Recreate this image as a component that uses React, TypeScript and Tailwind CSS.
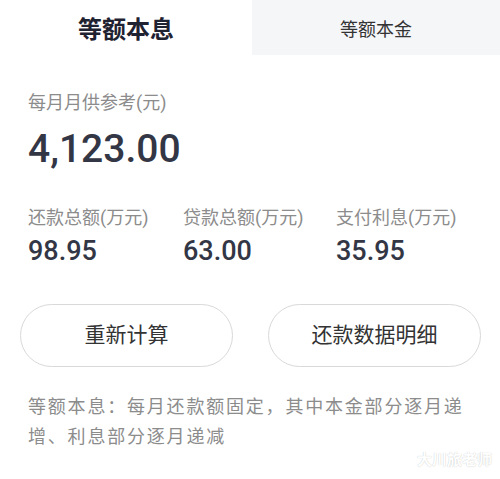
import React from "react";

const font = { fontFamily: '"Noto Sans CJK SC", sans-serif' };

export default function App() {
	return (
		<div
			className="relative w-[500px] h-[479px] bg-white overflow-hidden"
			style={{ fontFamily: 'Roboto, "Noto Sans CJK SC", sans-serif' }}
		>
			{/* 选项卡 */}
			<div className="flex h-[55px]">
				<div className="flex w-[252px] items-center justify-center bg-white">
					<span className="text-[24px] font-bold text-[#1f2230]" style={font}>
						等额本息
					</span>
				</div>
				<div className="flex flex-1 items-center justify-center bg-[#f5f6f8]">
					<span className="text-[18px] text-[#333] pt-[2px]" style={font}>
						等额本金
					</span>
				</div>
			</div>

			<div className="px-7">
				{/* 月供 */}
				<p className="mt-[35px] text-[18px] leading-[26px] text-[#8c8c8c]">每月月供参考(元)</p>
				<p className="mt-[10px] text-[39px] leading-[46px] font-medium text-[#333645]">4,123.00</p>

				{/* 汇总 */}
				<div className="mt-[33px] grid grid-cols-[155px_153px_1fr]">
					{[
						["还款总额(万元)", "98.95"],
						["贷款总额(万元)", "63.00"],
						["支付利息(万元)", "35.95"],
					].map(([label, value]) => (
						<div key={label} className="flex flex-col">
							<span className="text-[18px] leading-[26px] text-[#8c8c8c]">{label}</span>
							<span className="mt-[4px] text-[27px] leading-[32px] font-medium text-[#333645]">{value}</span>
						</div>
					))}
				</div>
			</div>

			{/* 按钮 */}
			<div className="mt-[37px] flex gap-[35px] pl-[20px]">
				<button className="flex h-[63px] w-[213px] items-center justify-center rounded-full border border-[#d9d9d9] text-[21px] text-[#333]">
					重新计算
				</button>
				<button className="flex h-[63px] w-[213px] items-center justify-center rounded-full border border-[#d9d9d9] text-[21px] text-[#333]">
					还款数据明细
				</button>
			</div>

			{/* 说明 */}
			<p className="mt-[25px] px-7 text-[18px] leading-[30px] tracking-[1.8px] text-[#8c8c8c]">
				等额本息：每月还款额固定，其中本金部分逐月递增、利息部分逐月递减
			</p>

			{/* 水印 */}
			<span
				className="absolute right-[8px] bottom-[8px] text-[15px] font-bold text-white"
				style={{ textShadow: "0 0 1px #bbb" }}
			>
				大川旅老师
			</span>
		</div>
	);
}
